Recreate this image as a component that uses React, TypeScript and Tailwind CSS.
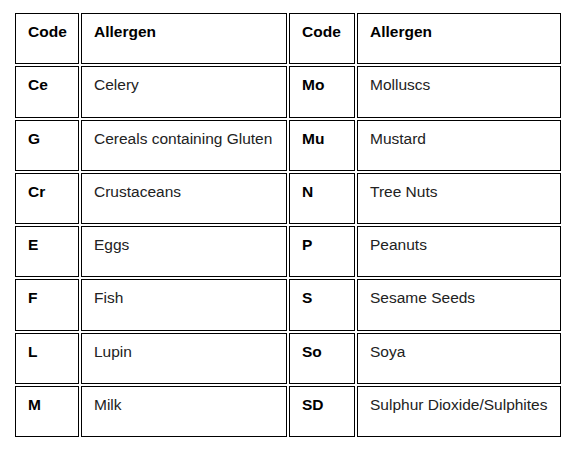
const rows: [string, string, string, string][] = [
  ["Ce", "Celery", "Mo", "Molluscs"],
  ["G", "Cereals containing Gluten", "Mu", "Mustard"],
  ["Cr", "Crustaceans", "N", "Tree Nuts"],
  ["E", "Eggs", "P", "Peanuts"],
  ["F", "Fish", "S", "Sesame Seeds"],
  ["L", "Lupin", "So", "Soya"],
  ["M", "Milk", "SD", "Sulphur Dioxide/Sulphites"],
];

const cell = "h-[51.25px] border border-black pl-[12px] pt-[9px] text-[15.5px] leading-[18px]";

const App = () => {
  return (
    <div className="w-[572px] h-[450px] bg-white pl-[15px] pt-[13px] font-['Liberation_Sans',Arial,sans-serif]">
      <div className="grid grid-cols-[64px_206px_66px_204px] gap-[2px]">
        <div className={`${cell} font-bold text-black`}>Code</div>
        <div className={`${cell} font-bold text-black`}>Allergen</div>
        <div className={`${cell} font-bold text-black`}>Code</div>
        <div className={`${cell} font-bold text-black`}>Allergen</div>
        {rows.map((r) => (
          <>
            <div key={r[0]} className={`${cell} font-bold text-black`}>{r[0]}</div>
            <div key={r[1]} className={`${cell} text-[#222]`}>{r[1]}</div>
            <div key={r[2]} className={`${cell} font-bold text-black`}>{r[2]}</div>
            <div key={r[3]} className={`${cell} text-[#222]`}>{r[3]}</div>
          </>
        ))}
      </div>
    </div>
  );
};

export default App;
